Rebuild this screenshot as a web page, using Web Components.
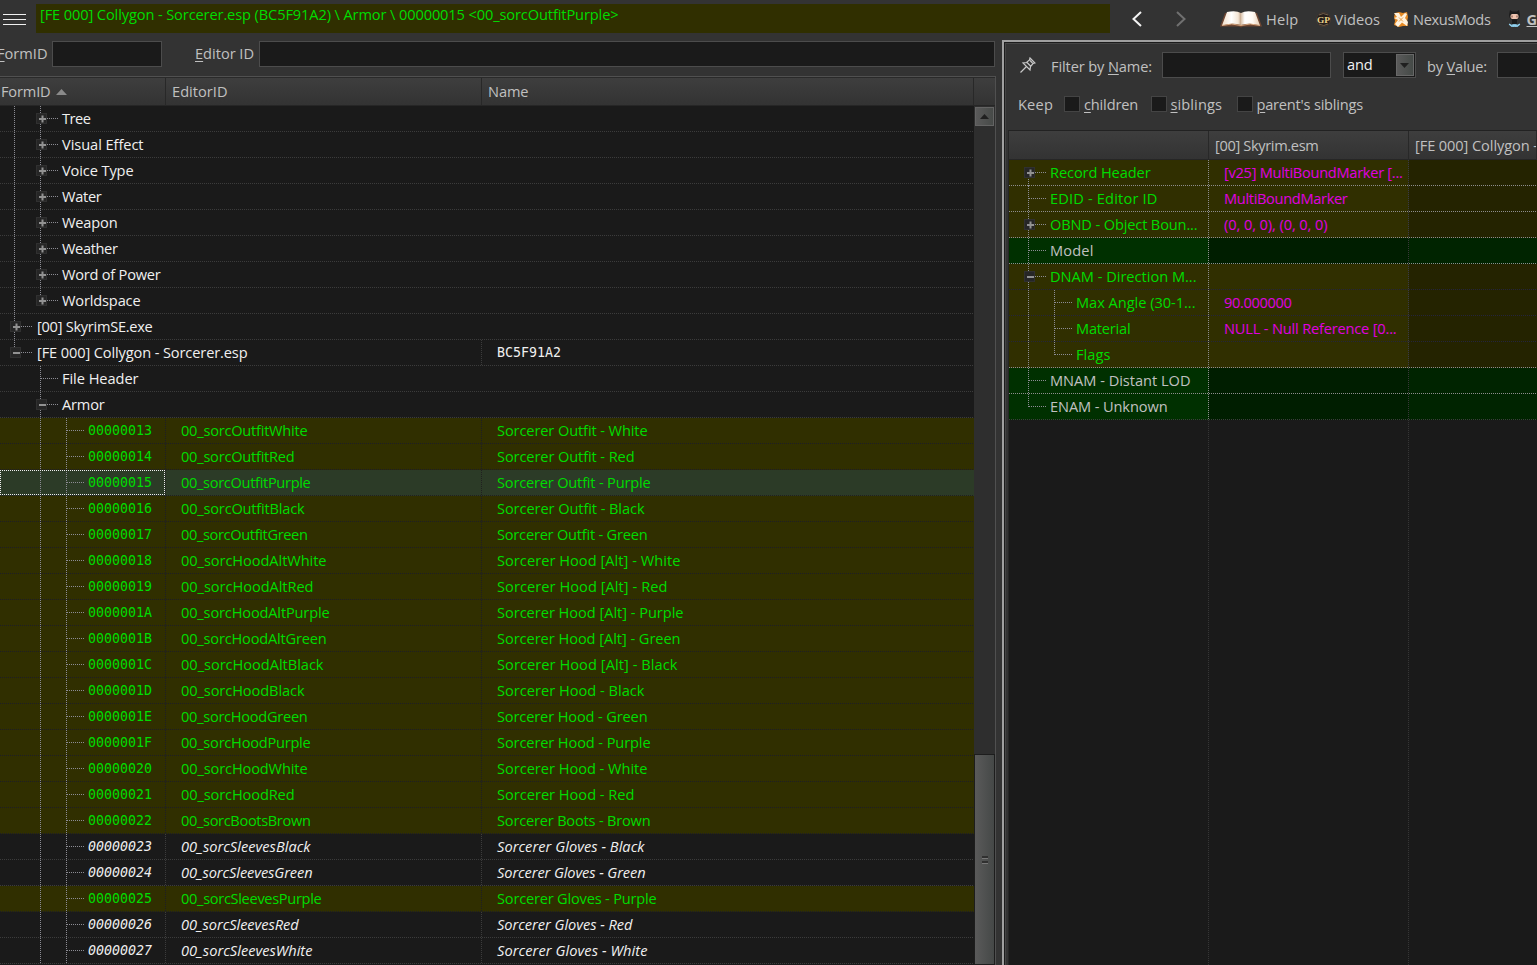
<!DOCTYPE html>
<html lang="en">
<head>
<meta charset="utf-8">
<title>xEdit</title>
<style>
    html, body { margin: 0; height: 100%; overflow: hidden; background: #333; }
    body {
        font-family: 'Open Sans', 'Noto Sans', 'Liberation Sans', sans-serif;
        font-size: 14.6px;
        --panel: #333333;
        --field: #1a1a1a;
        --edge: #4c4c4c;
        --label: #c0c0c0;
        --green: #00dc00;
        --override: #302f00;
        --mono: 'DejaVu Sans Mono', 'Liberation Mono', monospace;
    }
</style>
</head>
<body>
<x-edit-app></x-edit-app>

<script>
// Shadow root from a template string
function mount(el, html) {
    const tpl = document.createElement('template');
    tpl.innerHTML = html;
    const root = el.attachShadow({ mode: 'open' });
    root.appendChild(tpl.content.cloneNode(true));
    return root;
}

// --- UI-TEXT: one line of text, tracked to the width in "w" ---
class UiText extends HTMLElement {
    constructor() {
        super();
        mount(this, `<style>
            :host { display: inline-block; white-space: pre; flex: none; }
        </style><slot></slot>`);
    }
    connectedCallback() {
        const w = Number(this.getAttribute('w'));
        if (!w) return;
        this.style.letterSpacing = '0px';
        const natural = this.getBoundingClientRect().width;
        const count = this.textContent.length;
        this.style.letterSpacing = ((w + 0.5 - natural) / count).toFixed(3) + 'px';
    }
}
customElements.define('ui-text', UiText);

// --- UI-FIELD: empty edit box ---
class UiField extends HTMLElement {
    constructor() {
        super();
        mount(this, `<style>
            :host { display: block; box-sizing: border-box; height: 26px; flex: none;
                background: var(--field); border: 1px solid var(--edge); }
        </style>`);
    }
}
customElements.define('ui-field', UiField);

// --- UI-SELECT: drop-down with a raised button ---
class UiSelect extends HTMLElement {
    constructor() {
        super();
        mount(this, `<style>
            :host { display: flex; box-sizing: border-box; height: 26px; flex: none;
                background: var(--field); border: 1px solid var(--edge); color: #f0f0f0;
                padding: 1px; line-height: 21px; }
            .value { flex: 1; padding-left: 2px; }
            .btn { width: 18px; box-sizing: border-box; border: 1px solid #686868;
                background: linear-gradient(90deg, #5a5a5a, #454a47);
                display: flex; align-items: center; justify-content: center; }
        </style>
        <span class="value"><slot></slot></span>
        <span class="btn"><svg width="9" height="5"><path d="M0 0H9L4.5 5Z" fill="#202020"/></svg></span>`);
    }
}
customElements.define('ui-select', UiSelect);

// --- UI-CHECK: check box and caption ---
class UiCheck extends HTMLElement {
    constructor() {
        super();
        mount(this, `<style>
            :host { display: flex; align-items: center; gap: 4px; flex: none; }
            i { width: 16px; height: 16px; box-sizing: border-box; background: var(--field); border: 1px solid #444; }
            span { padding-bottom: 1px; }
        </style><i></i><span><slot></slot></span>`);
    }
}
customElements.define('ui-check', UiCheck);

// --- TREE-BRANCH: guide lines and expander in front of a node ---
// guides: one character per ancestor, "|" line or "." blank
// shape:  tee | last | first | none      box: + | -
class TreeBranch extends HTMLElement {
    constructor() {
        super();
        this.attachShadow({ mode: 'open' });
    }
    connectedCallback() {
        const guides = this.getAttribute('guides') || '';
        const shape = this.getAttribute('shape');
        const box = this.getAttribute('box');
        this.shadowRoot.innerHTML = `<style>
            :host { display: flex; height: 26px; flex: none; }
            svg { display: block; flex: none; }
            path { stroke: #8c8c94; stroke-width: 1; stroke-dasharray: 1 1; fill: none; }
            rect { fill: #262626; stroke: #303030; }
            path.sign { stroke: #929292; stroke-width: 2; stroke-dasharray: none; }
        </style>` + [...guides].map(g => `<svg width="26" height="26">${
            g === '|' ? '<path d="M12.5 0V26"/>' : ''}</svg>`).join('') + this.node(shape, box);
    }
    node(shape, box) {
        const top = shape === 'first' ? 13 : 0;
        const end = shape === 'last' ? 13 : 26;
        const expander = box ? `<rect x="8.5" y="7.5" width="10" height="10"/>
            <path class="sign" d="M11 13H18${box === '+' ? 'M14.5 9.500V16.500' : ''}"/>` : '';
        return `<svg width="34" height="26"><path d="M12.5 ${top}V${end}M13 12.5H30"/>${expander}</svg>`;
    }
}
customElements.define('tree-branch', TreeBranch);

// --- TREE-ROW: three cells, coloured by custom properties ---
class TreeRow extends HTMLElement {
    constructor() {
        super();
        mount(this, `<style>
            :host { display: flex; height: 26px; line-height: 25px; flex: none;
                --line: #3c3c3c; --vline: var(--line); --vline2: var(--vline); color: #f0f0f0; }
            :host([tone=green]) { --c0: var(--override); --c1: var(--override); --c2: var(--override);
                --line: #1d1d26; color: var(--green); }
            :host([tone=selected]) { --c0: #2c3b27; --c1: #2c3b27; --c2: #2c3b27;
                --line: #202020; color: var(--green); }
            :host([tone=italic]) { font-style: italic; }
            :host([tone=value]) { --c0: var(--override); --c1: var(--override); --c2: #242300;
                --line: #8d8d8d; --vline2: #383848; color: var(--green); }
            :host([tone=value][sub]) { --line: #24243c; --vline: #8d8d8d; }
            :host([tone=empty]) { --c0: #003000; --c1: #001e00; --c2: #002400;
                --line: #8d8d8d; --vline2: #383838; color: var(--label); }
            :host([final]) { --line: #3c3c3c; --vline: #8d8d8d; }
            .cell { box-sizing: border-box; display: flex; overflow: hidden; white-space: pre; --v: transparent;
                background:
                    repeating-linear-gradient(90deg, var(--line) 0 1px, transparent 1px 2px) 0 25px / 100% 1px no-repeat,
                    repeating-linear-gradient(180deg, var(--v) 0 1px, transparent 1px 2px) 100% 0 / 1px 100% no-repeat,
                    var(--c, transparent); }
            .a { width: var(--wa); padding-left: var(--pad); --c: var(--c0); --v: var(--vline); position: relative; }
            .b { width: var(--wb); --c: var(--c1); --v: var(--vline2); padding-left: 15px; }
            .c { flex: 1; --c: var(--c2); padding-left: 15px; }
            :host([span="2"]) .a { width: calc(var(--wa) + var(--wb)); }
            :host([span="3"]) .a { flex: 1; }
            :host([span="2"]) .b, :host([span="3"]) .b, :host([span="3"]) .c { display: none; }
            :host([span="3"]) .a { --v: transparent; }
            :host([tone=selected]) .a::after { content: ''; position: absolute; left: 0; top: 0; right: 1px; height: 25px;
                background:
                    repeating-linear-gradient(90deg, #eee 0 1px, transparent 1px 2px) 0 0 / 100% 1px no-repeat,
                    repeating-linear-gradient(90deg, #eee 0 1px, transparent 1px 2px) 0 100% / 100% 1px no-repeat,
                    repeating-linear-gradient(180deg, #eee 0 1px, transparent 1px 2px) 0 0 / 1px 100% no-repeat,
                    repeating-linear-gradient(180deg, #eee 0 1px, transparent 1px 2px) 100% 0 / 1px 100% no-repeat; }
        </style>
        <div class="cell a"><slot></slot></div>
        <div class="cell b"><slot name="b"></slot></div>
        <div class="cell c"><slot name="c"></slot></div>`);
    }
}
customElements.define('tree-row', TreeRow);

// --- HEADER-CELL ---
class HeaderCell extends HTMLElement {
    constructor() {
        super();
        mount(this, `<style>
            :host { display: flex; align-items: center; box-sizing: border-box; height: 28px; flex: none; gap: 5px;
                overflow: hidden; background: linear-gradient(#3e3e3e, #333333); color: var(--label);
                border-right: 1px solid #282828; border-bottom: 1px solid #262626; }
        </style><slot></slot>`);
    }
}
customElements.define('header-cell', HeaderCell);

// --- RECORD-TREE: left navigation tree ---
const GROUPS = [['Tree', 28], ['Visual Effect', 81], ['Voice Type', 71], ['Water', 39], ['Weapon', 55],
    ['Weather', 55], ['Word of Power', 98], ['Worldspace', 78]];

// form id, editor id, width, name, width, tone
const ARMOR = [
    ['00000013', '00_sorcOutfitWhite', 126, 'Sorcerer Outfit - White', 150],
    ['00000014', '00_sorcOutfitRed', 113, 'Sorcerer Outfit - Red', 137],
    ['00000015', '00_sorcOutfitPurple', 129, 'Sorcerer Outfit - Purple', 153, 'selected'],
    ['00000016', '00_sorcOutfitBlack', 123, 'Sorcerer Outfit - Black', 147],
    ['00000017', '00_sorcOutfitGreen', 126, 'Sorcerer Outfit - Green', 150],
    ['00000018', '00_sorcHoodAltWhite', 145, 'Sorcerer Hood [Alt] - White', 183],
    ['00000019', '00_sorcHoodAltRed', 132, 'Sorcerer Hood [Alt] - Red', 170],
    ['0000001A', '00_sorcHoodAltPurple', 148, 'Sorcerer Hood [Alt] - Purple', 186],
    ['0000001B', '00_sorcHoodAltGreen', 145, 'Sorcerer Hood [Alt] - Green', 183],
    ['0000001C', '00_sorcHoodAltBlack', 142, 'Sorcerer Hood [Alt] - Black', 180],
    ['0000001D', '00_sorcHoodBlack', 123, 'Sorcerer Hood - Black', 147],
    ['0000001E', '00_sorcHoodGreen', 126, 'Sorcerer Hood - Green', 150],
    ['0000001F', '00_sorcHoodPurple', 129, 'Sorcerer Hood - Purple', 153],
    ['00000020', '00_sorcHoodWhite', 126, 'Sorcerer Hood - White', 150],
    ['00000021', '00_sorcHoodRed', 113, 'Sorcerer Hood - Red', 137],
    ['00000022', '00_sorcBootsBrown', 129, 'Sorcerer Boots - Brown', 153],
    ['00000023', '00_sorcSleevesBlack', 129, 'Sorcerer Gloves - Black', 147, 'italic'],
    ['00000024', '00_sorcSleevesGreen', 131, 'Sorcerer Gloves - Green', 148, 'italic'],
    ['00000025', '00_sorcSleevesPurple', 140, 'Sorcerer Gloves - Purple', 159],
    ['00000026', '00_sorcSleevesRed', 117, 'Sorcerer Gloves - Red', 135, 'italic'],
    ['00000027', '00_sorcSleevesWhite', 131, 'Sorcerer Gloves - White', 150, 'italic']
];

class RecordTree extends HTMLElement {
    constructor() {
        super();
        const groups = GROUPS.map(([label, w], i) => `<tree-row span="3">
            <tree-branch guides="|" shape="${i === GROUPS.length - 1 ? 'last' : 'tee'}" box="+"></tree-branch><ui-text w="${w}">${label}</ui-text></tree-row>`).join('');
        const armor = ARMOR.map(([id, edid, we, name, wn, tone = 'green']) => `<tree-row tone="${tone}">
            <tree-branch guides=".|" shape="tee"></tree-branch><ui-text class="mono">${id}</ui-text>
            <ui-text slot="b" w="${we}">${edid}</ui-text><ui-text slot="c" w="${wn}">${name}</ui-text></tree-row>`).join('');
        mount(this, `<style>
            :host { display: flex; flex-direction: column; flex: 1; min-height: 0; margin-right: 6px;
                background: var(--field); border-top: 1px solid #505050; border-right: 1px solid #505050;
                --wa: 166px; --wb: 316px; --pad: 2px; }
            .head { display: flex; flex: none; border-top: 1px solid #2a2a2a; }
            .head ui-text { padding-bottom: 2px; }
            .body { display: flex; flex: 1; min-height: 0; }
            .rows { width: 974px; display: flex; flex-direction: column; overflow: hidden; }
            .mono { font-family: var(--mono); font-size: 13.29px; }
            .file { margin-left: 1px; }
            .scroll { flex: 1; display: flex; flex-direction: column; background: #2e2e2e; padding: 1px 1px 1px; }
            .up { height: 19px; box-sizing: border-box; border: 1px solid #646464; display: flex; align-items: center;
                justify-content: center; background: linear-gradient(90deg, #5a5a5a, #474a48); }
            .thumb { margin-top: auto; height: 209px; display: flex; flex-direction: column; align-items: center;
                justify-content: center; gap: 2px; background: linear-gradient(90deg, #5a5a5a, #454847);
                outline: 1px solid #1d1d1d; }
            .thumb i { width: 6px; height: 2px; background: #303030; border-bottom: 1px solid #777; }
        </style>
        <div class="head">
            <header-cell style="width:166px;padding-left:1px"><ui-text w="49">FormID</ui-text><svg width="11" height="6"><path d="M0 6L5.500 0L11 6Z" fill="#8a8a8a"/></svg></header-cell>
            <header-cell style="width:316px;padding-left:6px"><ui-text w="55">EditorID</ui-text></header-cell>
            <header-cell style="width:492px;padding-left:6px"><ui-text w="40">Name</ui-text></header-cell>
            <header-cell style="flex:1;border-right:0"></header-cell>
        </div>
        <div class="body">
            <div class="rows">
                ${groups}
                <tree-row span="3"><tree-branch shape="tee" box="+"></tree-branch><ui-text class="file" w="115">[00] SkyrimSE.exe</ui-text></tree-row>
                <tree-row span="2"><tree-branch shape="last" box="-"></tree-branch><ui-text class="file" w="210">[FE 000] Collygon - Sorcerer.esp</ui-text><ui-text slot="c" class="mono">BC5F91A2</ui-text></tree-row>
                <tree-row span="3"><tree-branch guides="." shape="tee"></tree-branch><ui-text w="76">File Header</ui-text></tree-row>
                <tree-row span="3"><tree-branch guides="." shape="tee" box="-"></tree-branch><ui-text w="42">Armor</ui-text></tree-row>
                ${armor}
            </div>
            <div class="scroll">
                <div class="up"><svg width="9" height="5"><path d="M0 5L4.500 0L9 5Z" fill="#202020"/></svg></div>
                <div class="thumb"><i></i><i></i></div>
            </div>
        </div>`);
    }
}
customElements.define('record-tree', RecordTree);

// --- RECORD-VIEW: right element/value grid ---
const ELEMENTS = [
    { label: 'Record Header', w: 100, value: '[v25] MultiBoundMarker [...', vw: 178, shape: 'first', box: '+' },
    { label: 'EDID - Editor ID', w: 107, value: 'MultiBoundMarker', vw: 123 },
    { label: 'OBND - Object Boun...', w: 147, value: '(0, 0, 0), (0, 0, 0)', vw: 103, box: '+' },
    { label: 'Model', w: 43, tone: 'empty' },
    { label: 'DNAM - Direction M...', w: 146, box: '-', sub: true },
    { label: 'Max Angle (30-1...', w: 119, value: '90.000000', vw: 67, guides: '|', sub: true },
    { label: 'Material', w: 54, value: 'NULL - Null Reference [0...', vw: 172, guides: '|', sub: true },
    { label: 'Flags', w: 34, guides: '|', shape: 'last' },
    { label: 'MNAM - Distant LOD', w: 140, tone: 'empty' },
    { label: 'ENAM - Unknown', w: 117, tone: 'empty', shape: 'last', final: true }
];

class RecordView extends HTMLElement {
    constructor() {
        super();
        const rows = ELEMENTS.map(e => `<tree-row tone="${e.tone || 'value'}"${e.sub ? ' sub' : ''}${e.final ? ' final' : ''}>
            <tree-branch guides="${e.guides || ''}" shape="${e.shape || 'tee'}"${e.box ? ` box="${e.box}"` : ''}></tree-branch><ui-text w="${e.w}">${e.label}</ui-text>
            ${e.value ? `<ui-text slot="b" class="value" w="${e.vw}">${e.value}</ui-text>` : ''}</tree-row>`).join('');
        mount(this, `<style>
            :host { display: flex; flex-direction: column; flex: 1; min-height: 0; background: var(--field);
                margin-left: 3px; border-left: 1px solid #262626; border-top: 1px solid #222;
                --wa: 200px; --wb: 200px; --pad: 7px; }
            .head { display: flex; flex: none; }
            .head header-cell { height: 29px; }
            .value { color: #e000e0; }
            .rest { flex: 1; display: flex; }
            .rest i { width: 200px; background: repeating-linear-gradient(180deg, #363636 0 1px, transparent 1px 2px) 100% 0 / 1px 100% no-repeat; }
        </style>
        <div class="head">
            <header-cell style="width:200px"></header-cell>
            <header-cell style="width:200px;padding-left:6px"><ui-text w="103">[00] Skyrim.esm</ui-text></header-cell>
            <header-cell style="flex:1;padding-left:6px"><ui-text w="211">[FE 000] Collygon - Sorcerer.esp</ui-text></header-cell>
        </div>
        ${rows}
        <div class="rest"><i></i><i></i></div>`);
    }
}
customElements.define('record-view', RecordView);

// --- TOP-BAR: menu button, record path, history and links ---
class TopBar extends HTMLElement {
    constructor() {
        super();
        mount(this, `<style>
            :host { display: flex; height: 40px; flex: none; color: var(--label); overflow: hidden; }
            .menu { margin: 14px 9px 0 3px; flex: none; }
            .path { width: 1074px; height: 29px; margin-top: 4px; box-sizing: border-box; padding-left: 4px; flex: none;
                background: var(--override); color: var(--green); line-height: 21px; }
            nav { display: flex; align-items: center; height: 38px; flex: none; }
            nav svg { flex: none; display: block; }
            nav ui-text { padding-bottom: 1px; }
        </style>
        <svg class="menu" width="24" height="12"><path d="M0 .5H23M0 5.500H23M0 10.500H23" stroke="#f0f0f0"/></svg>
        <div class="path"><ui-text w="578">[FE 000] Collygon - Sorcerer.esp (BC5F91A2) \\ Armor \\ 00000015 &lt;00_sorcOutfitPurple&gt;</ui-text></div>
        <nav>
            <svg width="12" height="18" style="margin-left:21px"><path d="M10 2L2.500 9L10 16" fill="none" stroke="#f4f4f4" stroke-width="2"/></svg>
            <svg width="12" height="18" style="margin-left:32px"><path d="M2 2L9.500 9L2 16" fill="none" stroke="#707070" stroke-width="2"/></svg>
            <svg width="42" height="18" viewBox="0 0 42 18" style="margin-left:33px">
                <defs>
                    <linearGradient id="left"><stop offset="0" stop-color="#f3dfc9"/><stop offset=".5" stop-color="#fff"/><stop offset=".85" stop-color="#f4e6d6"/><stop offset="1" stop-color="#c3a58a"/></linearGradient>
                    <linearGradient id="right"><stop offset="0" stop-color="#d9c2aa"/><stop offset=".2" stop-color="#fff"/><stop offset=".6" stop-color="#fffaf4"/><stop offset="1" stop-color="#e6cdb4"/></linearGradient>
                </defs>
                <path d="M5 3L0 16.500H19L21 17.500L23 16.500H42L37 3Z" fill="#6e4733"/>
                <path d="M7 2Q16 0 21 3V15Q12 12.500 2 15.500Z" fill="url(#left)"/>
                <path d="M35 2Q26 0 21 3V15Q30 12.500 40 15.500Z" fill="url(#right)"/>
                <path d="M2 15.500Q12 12.500 21 15.500Q30 12.500 40 15.500" fill="none" stroke="#d8a880"/>
            </svg>
            <ui-text w="32" style="margin-left:4px">Help</ui-text>
            <svg width="15" height="15" viewBox="0 0 15 15" style="margin-left:17px">
                <circle cx="7.500" cy="7.500" r="7" fill="#241c1a" stroke="#4a3c33"/>
                <path d="M3 3Q7 0 12 3M3 12Q8 15 12 12" stroke="#71604b" fill="none"/>
                <text x="7.500" y="10.800" text-anchor="middle" textLength="13" lengthAdjust="spacingAndGlyphs" font-family="Liberation Serif" font-weight="bold" font-size="9" fill="#e8d38c">GP</text>
            </svg>
            <ui-text w="45" style="margin-left:4px">Videos</ui-text>
            <svg width="14" height="15" viewBox="0 0 14 15" style="margin-left:14px">
                <path d="M1 1L5 0L9 1L13 0L14 5L13 10L14 14L9 14L5 15L0 13L1 9L0 5Z" fill="#e58a25"/>
                <path d="M0 1L5 1L7 5L11 1L13 2L11 6L14 10L13 14L8 10.500L4 15L1 12L4 8L0 6L3 5Z" fill="#fff2dd"/>
                <path d="M5 5.500L9 9.500M9 5.500L5 9.500" stroke="#e9a04c"/>
            </svg>
            <ui-text w="77" style="margin-left:5px">NexusMods</ui-text>
            <svg width="17" height="18" viewBox="0 0 17 18" style="margin-left:15px">
                <path d="M4 0L6 1.500H11L13 0L14 5Q14 10 8.500 10T3 5Z" fill="#1c1c1c"/>
                <rect x="4.500" y="4" width="8" height="5" rx="2" fill="#f0c5b0"/>
                <path d="M6 5.500V7.500M11 5.500V7.500" stroke="#70483c"/>
                <path d="M6 10H11V14H6Z" fill="#1c1c1c"/>
                <path d="M3 14Q5 16 8.500 14.500Q12 16 14 14Q13 17 8.500 16.500Q4 17 3 14Z" fill="#8fd0ee" stroke="#8fd0ee"/>
            </svg>
            <ui-text style="margin-left:4px;font-weight:bold;text-decoration:underline">GitHub</ui-text>
        </nav>`);
    }
}
customElements.define('top-bar', TopBar);

// --- X-EDIT-APP: window layout ---
class XEditApp extends HTMLElement {
    constructor() {
        super();
        mount(this, `<style>
            :host { display: flex; flex-direction: column; width: 1537px; height: 965px; overflow: hidden; background: var(--panel); color: var(--label); }
            main { display: flex; flex: 1; min-height: 0; }
            .left { width: 1002px; flex: none; display: flex; flex-direction: column; }
            .left .bar ui-text { padding-bottom: 2px; }
            .right { flex: 1; min-width: 0; display: flex; flex-direction: column;
                border-left: 2px solid #a0a0a0; border-top: 2px solid #a0a0a0; }
            .inner { flex: 1; min-height: 0; display: flex; flex-direction: column; box-sizing: border-box;
                border-left: 1px solid #1c1c1c; border-top: 1px solid #1c1c1c; box-shadow: inset 1px 1px #454545; }
            .bar { display: flex; align-items: center; flex: none; overflow: hidden; }
            .bar svg { flex: none; }
            u { text-decoration: underline; text-underline-offset: 2px; }
        </style>
        <top-bar></top-bar>
        <main>
            <section class="left">
                <div class="bar" style="height:28px;padding:0 0 8px">
                    <ui-text w="50" style="margin-left:-3px"><u>F</u>ormID</ui-text>
                    <ui-field style="width:110px;margin-left:4.5px"></ui-field>
                    <ui-text w="58.500" style="margin-left:33px"><u>E</u>ditor ID</ui-text>
                    <ui-field style="width:736px;margin-left:5px"></ui-field>
                </div>
                <record-tree></record-tree>
            </section>
            <section class="right"><div class="inner">
                <div class="bar" style="height:26px;margin-top:9px;padding-left:15px">
                    <svg width="16" height="16" viewBox="0 0 16 16" fill="none" stroke="#c8c8c8" stroke-width="1.200">
                        <path d="M10 1L15 6L13 6.500L10.500 9.500L10 13L3 6L6.500 5.500L9.500 3ZM6.500 9.500L.5 15.500M7 5.500L10.500 9M10 3.500L12.500 6"/>
                    </svg>
                    <ui-text w="100.500" style="margin-left:15px;padding-top:1px">Filter by <u>N</u>ame:</ui-text>
                    <ui-field style="width:169px;margin-left:10px"></ui-field>
                    <ui-select style="width:73px;margin-left:12px"><ui-text w="25">and</ui-text></ui-select>
                    <ui-text w="59.500" style="margin-left:11px;padding-top:1px">by <u>V</u>alue:</ui-text>
                    <ui-field style="width:120px;margin-left:10px"></ui-field>
                </div>
                <div class="bar" style="height:26px;margin:13px 0;padding-left:13px">
                    <ui-text w="34.500">Keep</ui-text>
                    <ui-check style="margin-left:11px"><ui-text w="53.500"><u>c</u>hildren</ui-text></ui-check>
                    <ui-check style="margin-left:12.500px"><ui-text w="51"><u>s</u>iblings</ui-text></ui-check>
                    <ui-check style="margin-left:14.500px"><ui-text w="106"><u>p</u>arent's siblings</ui-text></ui-check>
                </div>
                <record-view></record-view>
            </div></section>
        </main>`);
    }
}
customElements.define('x-edit-app', XEditApp);
</script>
</body>
</html>
